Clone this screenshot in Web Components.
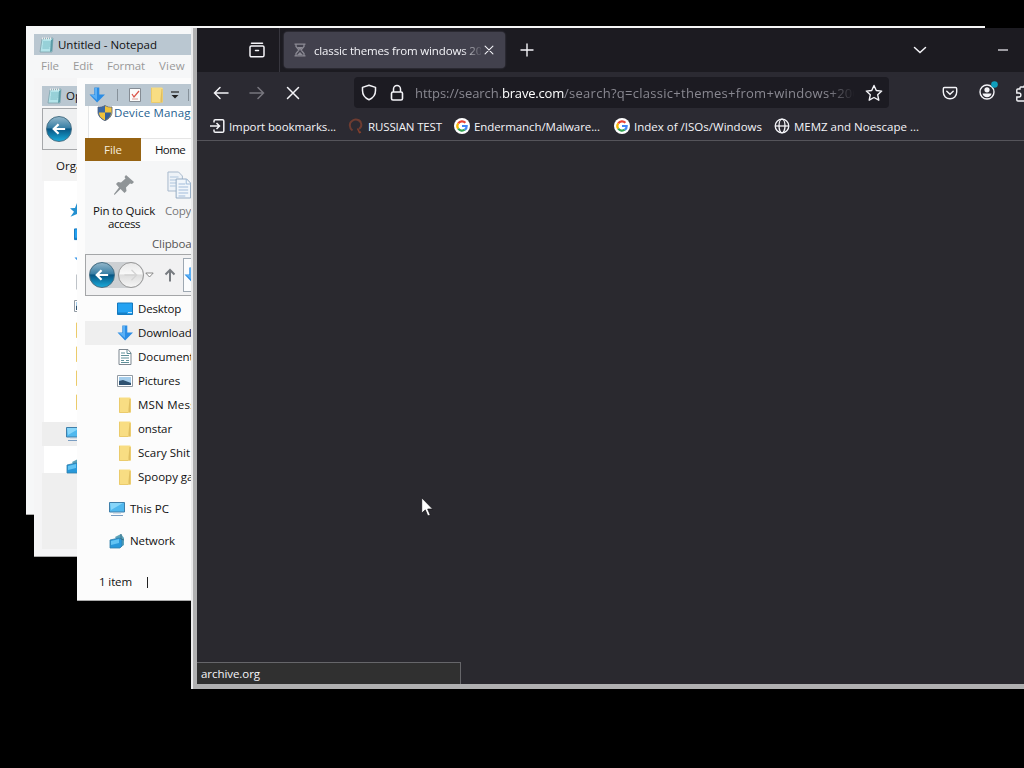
<!DOCTYPE html>
<html lang="en">
<head>
<meta charset="utf-8">
<title>Desktop</title>
<style>
  html, body {
    margin: 0;
    width: 1024px;
    height: 768px;
    overflow: hidden;
    background: #000;
    font: 11.5px/16px "Open Sans", "Noto Sans", sans-serif;
    color: #111;
  }
</style>
</head>
<body>
<desk-top>
  <desk-window style="left:26px;top:26px;width:300px;height:489px;--frame:#f6f7f8;--edge:#aaa"><notepad-view></notepad-view></desk-window>
  <desk-window style="left:34px;top:78px;width:300px;height:479px;--frame:#f5f5f6;--edge:#aaa"><open-view></open-view></desk-window>
  <desk-window style="left:77px;top:78px;width:300px;height:523px;--frame:#fcfcfc;--edge:#aaa"><explorer-view></explorer-view></desk-window>
  <browser-window></browser-window>
  <ui-icon class="cursor" name="cursor" w="12" h="20" style="position:absolute;left:421px;top:497px"></ui-icon>
</desk-top>

<script>
const icons = {
  cursor: ['0 0 12 20', '<path d="M.7.8v15.4l3.6-3.3 2.5 6.1 2.5-1-2.6-5.9h5z" fill="#fff" stroke="#16151b" stroke-width=".8"/>'],
  notepad: ['0 0 16 16', '<path d="M3 2l11-1-1 14H1z" fill="#b4e4ea" stroke="#7ea2ac" stroke-width=".8"/><path d="M4 5h8M4 7h8M3.6 9h8M3.4 11h7" stroke="#6cb2be" stroke-width=".8"/><path d="M12 3l2-1-1 12-2 1z" fill="#5b9ba6"/><path d="M3 1.5h10" stroke="#eee" stroke-width="2" stroke-dasharray="1 1"/>'],
  down: ['0 0 16 16', '<path d="M5.3.5h5v7H16l-7.9 8L.5 7.5h4.8z" fill="#2b8de5"/><path d="M6 1h2v12L2 8h4z" fill="#5bb0f5"/>'],
  check: ['0 0 16 16', '<path d="M2.5 1.5h11v13h-11z" fill="#fbfbfb" stroke="#858c94"/><path d="M5 7l2 3 5-6" fill="none" stroke="#db5348" stroke-width="1.2"/><path d="M5 12h6" stroke="#db9c95"/>'],
  folder: ['0 0 16 16', '<path d="M2 .5h11l1 1v14H2z" fill="#f8dd83"/><path d="M12.5 2h1v13.5h-2V12z" fill="#dfbe60"/><path d="M2.5 1v14.5h9" fill="none" stroke="#ebcb6b"/>'],
  caret: ['0 0 8 8', '<path d="M0 1h8" stroke="#222" stroke-width="1.2"/><path d="M.5 4h7L4 7.500z" fill="#222"/>'],
  shield: ['0 0 16 16', '<path d="M8 .5C6 2 3.5 2 1 2v5c0 4 3 7 7 8.7z" fill="#3a69a6"/><path d="M8 .5C10 2 12.500 2 15 2v5c0 4-3 7-7 8.700z" fill="#efc23b"/><path d="M2 7.500h6v8C5 14 2 11.500 2 7.500z" fill="#efc23b"/><path d="M8 7.500h6c0 4-3 6.500-6 8z" fill="#345f98"/><path d="M8 .5C6 2 3.500 2 1 2v5c0 4 3 7 7 8.700 4-1.700 7-4.700 7-8.700V2c-2.500 0-5 0-7-1.500z" fill="none" stroke="#506078" stroke-width=".8"/>'],
  pin: ['0 0 22 22', '<path d="M13 1l8 7-2 2-2-.5-4 4 .5 3.500-2 2-4-4L1.500 21 1 20l5-6.500L3 10l2-2 3 .5 4.500-4L11.500 3z" fill="#8f9497"/>'],
  copy: ['0 0 26 28', '<path d="M1 1h11l4 4v15H1z" fill="#eef3f8" stroke="#a7b9cc"/><path d="M3 6h9M3 9h10M3 12h10M3 15h6" stroke="#adc4dd"/><path d="M9.500 8h11l4 4v15h-15z" fill="#f1f6fb" stroke="#93aac3"/><path d="M20 8v5h5M12 13h7M12 16h10M12 19h10M12 22h10M12 25h7" fill="none" stroke="#9fbbd9"/>'],
  desktop: ['0 0 16 14', '<path d="M.5 1h15v11.500H.5z" fill="#24a2f2" stroke="#1578bd"/><path d="M1 10.500h9v2H1z" fill="#157fc6"/><path d="M11 10.500h4" stroke="#bfe6ff"/>'],
  document: ['0 0 14 16', '<path d="M1 .5h9L13 4v11.500H1z" fill="#fff" stroke="#7d8790"/><path d="M9 1v3.500h4M3 4h4M3 6.500h8M3 9h8M3 11.500h3M8 11.500h3M3 13.500h8" fill="none" stroke="#5f9099"/>'],
  picture: ['0 0 16 12', '<path d="M.5.5h15v11H.5z" fill="#fff" stroke="#919aa3"/><path d="M2 2h12v8H2z" fill="#a5cdeb"/><path d="M2 6l4-1 8 3v2H2z" fill="#2f5271"/>'],
  pc: ['0 0 16 16', '<path d="M.5 1.500h15v9.500H.5z" fill="#50b8ee" stroke="#3f7faa"/><path d="M1 2h13L2 9z" fill="#87d6fa"/><path d="M2 14.500h12" stroke="#7a9dc2"/><path d="M4 12.500h8" stroke="#d4dde7"/>'],
  network: ['0 0 16 16', '<path d="M6 4l6-3 3 4v7l-3 2z" fill="#5da4bb"/><path d="M1 7l9-2 3 1v7l-2 2H1z" fill="#2898da" stroke="#317da8" stroke-width=".8"/><path d="M2 8l8-2v4l-8 2z" fill="#62c4f3"/><path d="M12 1v5l3 1" stroke="#3b7086" fill="none"/>'],
  star: ['0 0 16 16', '<path d="M8 1l2 5 5 .3-4 3.400 1.500 5L8 12l-6.500 2.700 3.500-5L1 6.300 6 6z" fill="#2390d0"/>'],
  hollow: ['0 0 8 6', '<path d="M.7 1h6.600L4 5z" fill="#fff" stroke="#777" stroke-width=".8"/>'],
  up: ['0 0 12 14', '<path d="M6 13.500V2M1.500 6.500L6 2l4.500 4.500" fill="none" stroke="#777b80" stroke-width="2"/>'],
  archive: ['0 0 18 18', '<path d="M3.500 2.300h11M2 6.200c0-.8.5-1.300 1.300-1.300h11.400c.8 0 1.300.5 1.300 1.300v8c0 1-.6 1.600-1.600 1.600H3.600c-1 0-1.600-.6-1.600-1.600zM7.500 9.500h3" fill="none" stroke="currentColor" stroke-width="1.500" stroke-linecap="round"/>'],
  hourglass: ['0 0 12 14', '<path d="M.5 1.200h11M.5 12.800h11M2 1v2.500L5 7l-3 3.500V13M10 1v2.500L7 7l3 3.500V13" fill="none" stroke="currentColor" stroke-width="1.300"/><path d="M3 4h6L6 7zM3 12l3-3 3 3z" fill="currentColor"/>'],
  close: ['0 0 14 14', '<path d="M1.500 1.500l11 11M12.500 1.500l-11 11" stroke="currentColor" stroke-width="1.500" stroke-linecap="round"/>'],
  plus: ['0 0 14 14', '<path d="M7 1v12M1 7h12" stroke="currentColor" stroke-width="1.400" stroke-linecap="round"/>'],
  chevron: ['0 0 14 8', '<path d="M1.500 1.500L7 6.500l5.500-5" fill="none" stroke="currentColor" stroke-width="1.500" stroke-linecap="round"/>'],
  minus: ['0 0 12 2', '<path d="M1 1h10" stroke="currentColor" stroke-width="1.200"/>'],
  back: ['0 0 16 14', '<path d="M15 7H1.500M7 1.500L1.500 7 7 12.500" fill="none" stroke="currentColor" stroke-width="1.500" stroke-linecap="round"/>'],
  forward: ['0 0 16 14', '<path d="M1 7h13.500M9 1.500L14.500 7 9 12.500" fill="none" stroke="currentColor" stroke-width="1.500" stroke-linecap="round"/>'],
  orbback: ['0 0 16 14', '<path d="M15 7H2M7.500 1.500L2 7l5.500 5.500" fill="none" stroke="currentColor" stroke-width="2.600"/>'],
  guard: ['0 0 16 18', '<path d="M8 1.300L14.500 3.500V7c0 5-2.500 8-6.500 9.700C4 15 1.500 12 1.500 7V3.500z" fill="none" stroke="currentColor" stroke-width="1.500" stroke-linejoin="round"/>'],
  lock: ['0 0 14 18', '<rect x="1.500" y="8" width="11" height="8" rx="1.500" fill="none" stroke="currentColor" stroke-width="1.600"/><path d="M3.500 8V5a3.500 3.500 0 017 0v3" fill="none" stroke="currentColor" stroke-width="1.500"/>'],
  mark: ['0 0 18 18', '<path d="M9 1.500l2.300 5 5.400.6-4 3.700 1.100 5.400L9 13.500l-4.800 2.700 1.100-5.400-4-3.700 5.400-.6z" fill="none" stroke="currentColor" stroke-width="1.400" stroke-linejoin="round"/>'],
  pocket: ['0 0 16 16', '<path d="M2.500 2.500h11c.7 0 1.200.5 1.200 1.200V7c0 4-3 6.800-6.700 6.800S1.300 11 1.300 7V3.700c0-.7.5-1.200 1.200-1.200z" fill="none" stroke="currentColor" stroke-width="1.400"/><path d="M4.800 6.300L8 9.300l3.200-3" fill="none" stroke="currentColor" stroke-width="1.500" stroke-linecap="round"/>'],
  account: ['0 0 20 20', '<circle cx="9" cy="11" r="7" fill="none" stroke="currentColor" stroke-width="1.400"/><circle cx="9" cy="8.800" r="2.600" fill="currentColor"/><path d="M4.500 12.500h9c-.5 2.500-2.300 3.700-4.500 3.700s-4-1.200-4.500-3.700z" fill="currentColor"/><circle cx="16.500" cy="3.500" r="3.300" fill="#109fbd"/>'],
  puzzle: ['0 0 18 18', '<path d="M5 5V3.800c0-.5.4-.8.800-.8H9c0-3 5-3 5 0h4v14H3c-.8 0-1.200-.4-1.200-1v-3H4c2.500 0 2.500-4 0-4H1.800V6c0-.6.4-1 1-1z" fill="none" stroke="currentColor" stroke-width="1.400"/>'],
  import: ['0 0 16 16', '<path d="M5 4.500V3c0-.8.500-1.300 1.300-1.300h7.200c.8 0 1.300.5 1.300 1.300v10c0 .8-.5 1.300-1.300 1.300H6.300C5.500 14.300 5 13.800 5 13v-1.500M1 8h9M7.500 5l3 3-3 3" fill="none" stroke="currentColor" stroke-width="1.500"/>'],
  headset: ['0 0 16 16', '<path d="M4.500 12.500C1 10 1 5 4 3c3-2.500 8-1.500 9 2 .8 2.500 0 4.500-2 6" fill="none" stroke="#6e3c31" stroke-width="2"/><path d="M9.500 10.500l2 4 1.500-.5" fill="none" stroke="#853f2c" stroke-width="1.500"/>'],
  google: ['0 0 16 16', '<circle cx="8" cy="8" r="8" fill="#fff"/><g fill="none" stroke-width="2.200"><path d="M11.400 4.800A4.700 4.700 0 004.200 5.300" stroke="#e94335"/><path d="M4.200 5.300a4.700 4.700 0 000 5.400" stroke="#f9bb05"/><path d="M4.200 10.700a4.700 4.700 0 006.600 1" stroke="#34a353"/><path d="M10.800 11.700C12.300 10.800 12.800 9.500 12.700 8H8" stroke="#4286f5"/></g>'],
  globe: ['0 0 16 16', '<g fill="none" stroke="currentColor" stroke-width="1.300"><circle cx="8" cy="8" r="6.800"/><ellipse cx="8" cy="8" rx="3" ry="6.800"/><path d="M1.200 8h13.600"/></g>']
};

class DeskTop extends HTMLElement {
  constructor() {
    super();
    this.attachShadow({ mode: 'open' }).innerHTML = `
      <style>:host { display: block; position: relative; width: 1024px; height: 768px; overflow: hidden; }</style>
      <slot></slot>`;
  }
}

class UiIcon extends HTMLElement {
  connectedCallback() {
    if (this.shadowRoot) return;
    const [box, body] = icons[this.getAttribute('name')];
    const w = this.getAttribute('w') || 16;
    const h = this.getAttribute('h') || w;
    this.attachShadow({ mode: 'open' }).innerHTML = `
      <style>:host { display: block; flex: none; width: ${w}px; height: ${h}px; } svg { display: block; }</style>
      <svg width="${w}" height="${h}" viewBox="${box}" preserveAspectRatio="none">${body}</svg>`;
  }
}

// A line of text tracked to the given width.
class FitText extends HTMLElement {
  connectedCallback() {
    if (this.shadowRoot) return;
    this.attachShadow({ mode: 'open' }).innerHTML = `
      <style>:host { display: block; flex: none; width: max-content; white-space: nowrap; }</style>
      <slot></slot>`;
    const target = Number(this.getAttribute('width'));
    if (target) {
      const gap = (target - this.getBoundingClientRect().width) / this.textContent.length;
      this.style.letterSpacing = gap.toFixed(3) + 'px';
    }
  }
}

class DeskWindow extends HTMLElement {
  constructor() {
    super();
    this.attachShadow({ mode: 'open' }).innerHTML = `
      <style>
        :host { display: block; position: absolute; box-sizing: border-box; overflow: hidden;
          background: var(--frame); border-bottom: 1px solid var(--edge); }
      </style>
      <slot></slot>`;
  }
}

class NavOrb extends HTMLElement {
  connectedCallback() {
    const off = this.hasAttribute('off');
    this.attachShadow({ mode: 'open' }).innerHTML = `
      <style>
        :host { display: grid; place-items: center; flex: none; box-sizing: border-box; width: 26px; height: 26px;
          border-radius: 50%; border: 1px solid ${off ? '#999' : '#456f85'}; color: ${off ? '#d4d4d4' : '#fff'};
          background: ${off ? 'linear-gradient(#e8e8e8, #f9f9f9 45%, #ddd 50%, #f6f6f6)'
            : 'linear-gradient(#90b5c9, #397fa5 45%, #075583 50%, #1aa9d8)'}; }
      </style>
      <ui-icon name="${off ? 'forward' : 'orbback'}" w="14" h="12"></ui-icon>`;
  }
}

class NotepadView extends HTMLElement {
  constructor() {
    super();
    this.attachShadow({ mode: 'open' }).innerHTML = `
      <style>
        :host { display: block; padding: 8px 0 0 8px; }
        .title { display: flex; align-items: center; gap: 3px; height: 21px; padding-left: 5px; background: #bac7d1; }
        .menu { display: flex; gap: 14px; height: 21px; align-items: center; padding-left: 7px; color: #999; }
      </style>
      <div class="title"><ui-icon name="notepad" w="16"></ui-icon><fit-text width="99">Untitled - Notepad</fit-text></div>
      <div class="menu"><fit-text width="18">File</fit-text><fit-text width="20">Edit</fit-text><fit-text width="38">Format</fit-text><fit-text width="26">View</fit-text></div>`;
  }
}

class OpenView extends HTMLElement {
  constructor() {
    super();
    this.attachShadow({ mode: 'open' }).innerHTML = `
      <style>
        :host { display: block; padding: 8px 0 0 8px; }
        .title { display: flex; align-items: center; gap: 3px; height: 20px; padding-left: 5px; background: #bac7d1; }
        .nav { display: flex; align-items: center; height: 40px; margin-top: 2px; padding-left: 3px;
          border: 1px solid #a5a7aa; background: #eff0f1; }
        .bar { height: 31px; padding-left: 14px; line-height: 31px; background: #f3f3f3; }
        .tree { display: flex; flex-direction: column; height: 292px; margin-left: 2px; background: #fff; }
        .tree > div { display: flex; align-items: center; height: 24px; padding-left: 25px; flex: none; }
        .tree > .deep { padding-left: 30px; }
        .tree > .pc { margin: 8px 0 0 -2px; padding-left: 24px; background: #eee; }
        .tree > .net { margin-top: 8px; padding-left: 22px; }
        .first { margin-top: 17px; }
        .foot { height: 76px; background: #efefef; }
      </style>
      <div class="title"><ui-icon name="notepad" w="16"></ui-icon><span>Open</span></div>
      <div class="nav"><nav-orb></nav-orb></div>
      <div class="bar">Organize</div>
      <div class="tree">
        <div class="first"><ui-icon name="star"></ui-icon></div>
        <div class="deep"><ui-icon name="desktop" w="16" h="13"></ui-icon></div>
        <div class="deep"><ui-icon name="down"></ui-icon></div>
        <div class="deep"><ui-icon name="document" w="14" h="16" style="margin-left:2px"></ui-icon></div>
        <div class="deep"><ui-icon name="picture" w="16" h="12"></ui-icon></div>
        <div class="deep"><ui-icon name="folder"></ui-icon></div>
        <div class="deep"><ui-icon name="folder"></ui-icon></div>
        <div class="deep"><ui-icon name="folder"></ui-icon></div>
        <div class="deep"><ui-icon name="folder"></ui-icon></div>
        <div class="pc"><ui-icon name="pc" w="16" h="16"></ui-icon></div>
        <div class="net"><ui-icon name="network"></ui-icon></div>
      </div>
      <div class="foot"></div>`;
  }
}

class TreeItem extends HTMLElement {
  connectedCallback() {
    const icon = this.getAttribute('icon');
    const root = this.hasAttribute('root');
    const h = { desktop: 14, picture: 12 }[icon] || 16;
    this.attachShadow({ mode: 'open' }).innerHTML = `
      <style>
        :host { display: flex; align-items: center; gap: ${icon === 'document' ? 6 : 5}px; height: 24px;
          padding-left: ${root ? 24 : icon === 'document' ? 33 : 32}px; }
        :host([selected]) { background: #efefef; }
        :host([root]) { margin-top: 8px; }
      </style>
      <ui-icon name="${icon}" w="${icon === 'document' ? 14 : 16}" h="${h}"></ui-icon>
      <fit-text width="${this.getAttribute('width')}">${this.getAttribute('label')}</fit-text>`;
  }
}

class ExplorerView extends HTMLElement {
  constructor() {
    super();
    this.attachShadow({ mode: 'open' }).innerHTML = `
      <style>
        :host { display: block; padding: 6px 0 0 8px; }
        .quick { display: flex; align-items: center; height: 22px; padding-left: 4px; background: #bac7d1; }
        .quick i { width: 1px; height: 12px; background: #86919a; }
        .link { display: flex; align-items: flex-start; height: 32px; margin-left: 3px; padding-left: 8px;
          background: #fff; color: #265f91; box-sizing: border-box; border-left: 1px solid #e4e6e8; }
        .link ui-icon { margin-top: -1px; }
        .link fit-text { margin: -1px 0 0 1px; }
        .tabs { display: flex; height: 23px; line-height: 23px; background: #fdfdfd; box-shadow: inset 0 1px #e5e5e5; }
        .file { display: flex; width: 56px; justify-content: center; background: #966313; color: #f7eddc; }
        .home { margin-left: 14px; }
        .ribbon { display: flex; height: 93px; background: #f5f6f7; }
        .pin, .copy { display: flex; flex-direction: column; align-items: center; line-height: 13px; }
        .pin { width: 78px; padding-top: 13px; }
        .pin ui-icon { margin-bottom: 8px; }
        .copy { width: 34px; align-items: flex-start; padding-top: 10px; color: #777; }
        .copy ui-icon { margin: 0 0 5px 4px; }
        .copy .group { margin: 20px 0 0 -11px; color: #555; }
        .copy .name { margin-left: 2px; }
        .nav { display: flex; align-items: center; box-sizing: border-box; height: 42px; margin-bottom: 1px; padding-left: 3px;
          border: 1px solid #a4a6a8; background: #f1f1f2; }
        .pair { display: flex; gap: 3px; background: #cdd0d3; border-radius: 14px; }
        .address { display: flex; align-items: center; height: 32px; width: 90px; margin-left: 7px; border: 1px solid #9ea8b2; background: #fbfcfd; }
        .status { display: flex; align-items: center; gap: 15px; height: 24px; margin: 17px 0 0 14px; }
        .status i { width: 1px; height: 11px; background: #222; }
      </style>
      <div class="quick">
        <ui-icon name="down"></ui-icon><i style="margin:0 9px 0 12px"></i>
        <ui-icon name="check"></ui-icon><ui-icon name="folder" style="margin:0 6px"></ui-icon>
        <ui-icon name="caret" w="8" h="8"></ui-icon><i style="margin-left:9px"></i>
      </div>
      <div class="link"><ui-icon name="shield"></ui-icon><fit-text width="88">Device Manager</fit-text></div>
      <div class="tabs"><div class="file"><fit-text width="18">File</fit-text></div><fit-text class="home" width="30">Home</fit-text></div>
      <div class="ribbon">
        <div class="pin"><ui-icon name="pin" w="22"></ui-icon><fit-text width="62">Pin to Quick</fit-text><fit-text width="32">access</fit-text></div>
        <div class="copy"><ui-icon name="copy" w="25" h="28"></ui-icon><fit-text class="name" width="26">Copy</fit-text><fit-text class="group" width="51">Clipboard</fit-text></div>
      </div>
      <div class="nav">
        <div class="pair"><nav-orb></nav-orb><nav-orb off></nav-orb></div>
        <ui-icon name="hollow" w="9" h="6" style="margin-left:1px"></ui-icon>
        <ui-icon name="up" w="12" h="14" style="margin-left:10px"></ui-icon>
        <div class="address"><ui-icon name="down"></ui-icon></div>
      </div>
      <tree-item icon="desktop" label="Desktop" width="43"></tree-item>
      <tree-item icon="down" label="Downloads" width="59" selected></tree-item>
      <tree-item icon="document" label="Documents" width="61"></tree-item>
      <tree-item icon="picture" label="Pictures" width="42"></tree-item>
      <tree-item icon="folder" label="MSN Messenger" width="90"></tree-item>
      <tree-item icon="folder" label="onstar" width="34"></tree-item>
      <tree-item icon="folder" label="Scary Shit" width="52"></tree-item>
      <tree-item icon="folder" label="Spoopy games" width="78"></tree-item>
      <tree-item icon="pc" label="This PC" width="39" root></tree-item>
      <tree-item icon="network" label="Network" width="45" root></tree-item>
      <div class="status"><fit-text width="33">1 item</fit-text><i></i></div>`;
  }
}

class BookmarkItem extends HTMLElement {
  connectedCallback() {
    this.attachShadow({ mode: 'open' }).innerHTML = `
      <style>:host { display: flex; align-items: center; gap: 4px; flex: none; } fit-text { margin-top: 1px; }</style>
      <ui-icon name="${this.getAttribute('icon')}" w="16"></ui-icon>
      <fit-text width="${this.getAttribute('width')}">${this.getAttribute('label')}</fit-text>`;
  }
}

class BrowserWindow extends HTMLElement {
  constructor() {
    super();
    this.attachShadow({ mode: 'open' }).innerHTML = `
      <style>
        :host { display: flex; flex-direction: column; position: absolute; left: 193px; top: 26px; box-sizing: border-box;
          width: 850px; height: 663px; color: #f4f4f8; background: #2a292f;
          border: solid #b0b0b1; border-width: 0 0 5px 4px; box-shadow: -2px 0 #ececed; }
        .top { width: 794px; height: 2px; margin-left: -6px; background: #f5f5f5; flex: none; }
        .rest { margin-top: -2px; margin-left: 788px; height: 2px; background: #000; flex: none; }
        .strip { display: flex; align-items: center; height: 44px; flex: none; background: #1c1b21; }
        .archive { margin-left: 51px; }
        .sep { width: 1px; height: 44px; margin: 0 4px 0 13px; background: #37363e; }
        .tab { display: flex; align-items: center; box-sizing: border-box; width: 221px; height: 36px; padding-left: 10px;
          border-radius: 4px; background: #42414d; box-shadow: 0 0 2px #55535f; }
        .tab .name { width: 167px; margin: 1px 3px 0 8px; overflow: hidden;
          -webkit-mask-image: linear-gradient(90deg, #000 148px, transparent 169px); }
        .tools { display: flex; align-items: center; height: 41px; flex: none; padding-left: 16px; background: #2b2a32; }
        .dim { color: #77767e; }
        .url { display: flex; align-items: center; box-sizing: border-box; width: 535px; height: 31px; margin-left: 54px;
          padding-left: 7px; border-radius: 4px; background: #1c1b22; }
        .address { display: flex; width: 439px; margin: 0 11px 0 11px; overflow: hidden; font-size: 13px; color: #898891;
          -webkit-mask-image: linear-gradient(90deg, #000 412px, transparent 440px); }
        .address b { font-weight: 400; color: #fff; }
        .marks { display: flex; align-items: center; box-sizing: border-box; height: 28px; flex: none; padding: 0 0 1px 12px;
          background: #2b2a32; border-bottom: 1px solid #55545a; }
        .page { flex: 1; display: flex; align-items: flex-end; }
        .status { display: flex; align-items: center; box-sizing: border-box; width: 264px; height: 22px; padding-left: 4px;
          border: solid #66666a; border-width: 1px 1px 0 0; background: #303030; }
      </style>
      <div class="top"></div><div class="rest"></div>
      <div class="strip">
        <ui-icon class="archive" name="archive" w="18"></ui-icon><div class="sep"></div>
        <div class="tab">
          <ui-icon name="hourglass" w="12" h="14" style="color:#8b8a94"></ui-icon>
          <div class="name"><fit-text width="181">classic themes from windows 2000</fit-text></div>
          <ui-icon name="close" w="10"></ui-icon>
        </div>
        <ui-icon name="plus" w="14" style="margin-left:15px"></ui-icon>
        <ui-icon name="chevron" w="14" h="8" style="margin-left:379px"></ui-icon>
        <ui-icon name="minus" w="12" h="2" style="margin-left:70px"></ui-icon>
      </div>
      <div class="tools">
        <ui-icon name="back" w="16" h="14"></ui-icon>
        <ui-icon class="dim" name="forward" w="16" h="14" style="margin-left:20px"></ui-icon>
        <ui-icon name="close" w="14" style="margin-left:21px"></ui-icon>
        <div class="url">
          <ui-icon name="guard" w="16" h="17"></ui-icon>
          <ui-icon name="lock" w="14" h="18" style="margin-left:13px"></ui-icon>
          <div class="address"><fit-text width="87">https://search.</fit-text><b><fit-text width="62">brave.com</fit-text></b><fit-text width="304">/search?q=classic+themes+from+windows+2000</fit-text></div>
          <ui-icon name="mark" w="18"></ui-icon>
        </div>
        <ui-icon name="pocket" w="16" style="margin-left:53px"></ui-icon>
        <ui-icon name="account" w="20" style="margin:-3px 0 0 20px"></ui-icon>
        <ui-icon name="puzzle" w="18" style="margin-left:17px"></ui-icon>
      </div>
      <div class="marks">
        <bookmark-item icon="import" label="Import bookmarks..." width="107"></bookmark-item>
        <bookmark-item icon="headset" label="RUSSIAN TEST" width="74" style="margin-left:12px"></bookmark-item>
        <bookmark-item icon="google" label="Endermanch/Malware..." width="126" style="margin-left:12px"></bookmark-item>
        <bookmark-item icon="google" label="Index of /ISOs/Windows" width="128" style="margin-left:14px"></bookmark-item>
        <bookmark-item icon="globe" label="MEMZ and Noescape ..." width="125" style="margin-left:12px"></bookmark-item>
      </div>
      <div class="page"><div class="status"><fit-text width="59">archive.org</fit-text></div></div>`;
  }
}

customElements.define('ui-icon', UiIcon);
customElements.define('fit-text', FitText);
customElements.define('nav-orb', NavOrb);
customElements.define('tree-item', TreeItem);
customElements.define('bookmark-item', BookmarkItem);
customElements.define('notepad-view', NotepadView);
customElements.define('open-view', OpenView);
customElements.define('explorer-view', ExplorerView);
customElements.define('browser-window', BrowserWindow);
customElements.define('desk-window', DeskWindow);
customElements.define('desk-top', DeskTop);
</script>
</body>
</html>
